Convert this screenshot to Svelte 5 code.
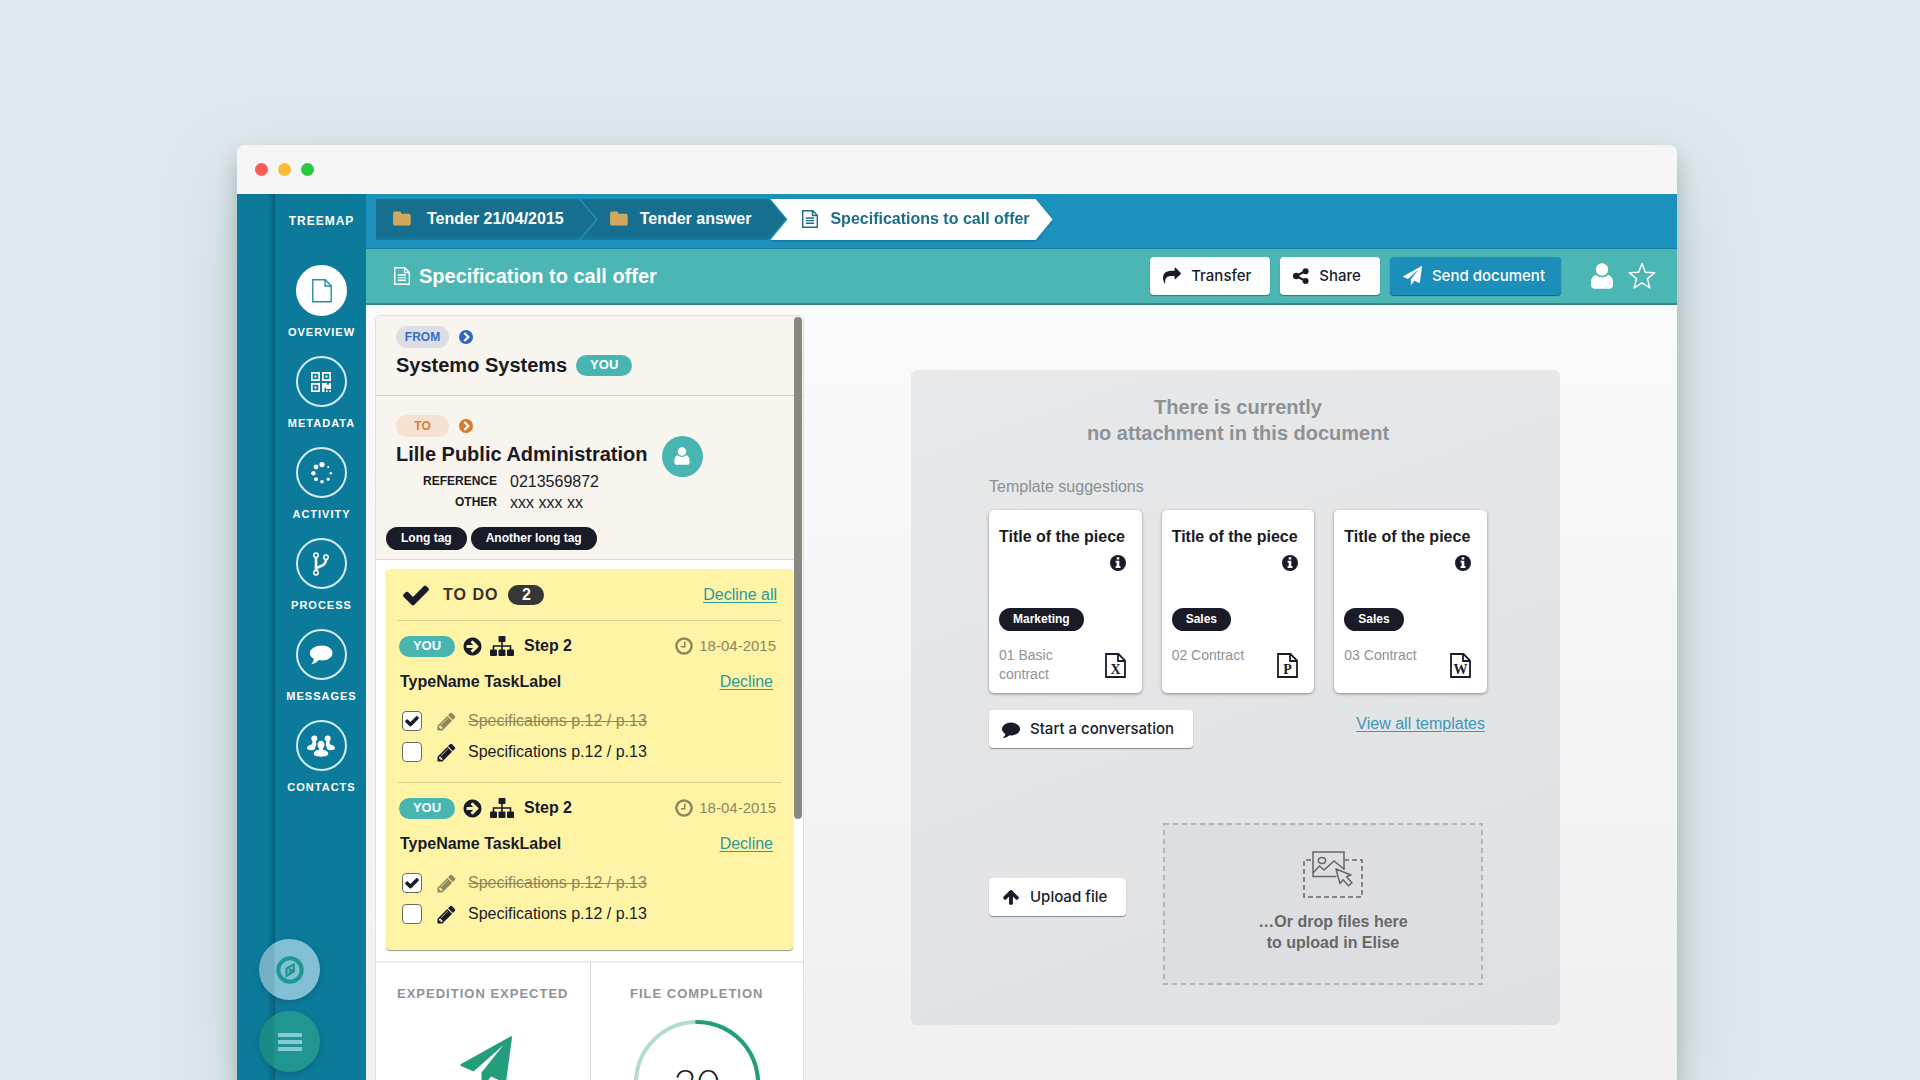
<script>
  const FA = {
    share: 'M1792 640q0 26-19 45l-512 512q-19 19-45 19t-45-19-19-45v-256h-224q-98 0-175.500 6t-154 21.500-133 42.500-105.500 69.500-80 101-48.500 138.500-17.500 181q0 55 5 123 0 6 2.500 23.500t2.500 26.500q0 15-8.500 25t-23.500 10q-16 0-28-17-7-9-13-22t-13.500-30-10.500-24q-127-285-127-451 0-199 53-333 162-403 875-403h224v-256q0-26 19-45t45-19 45 19l512 512q19 19 19 45z',
    comment: 'M1792 896q0 174-120 321.500t-326 233-450 85.500q-70 0-145-8-198 175-460 242-49 14-114 22-17 2-30.500-9t-17.500-29v-1q-3-4-.5-12t2-10 4.500-9.500l6-9 7-8.500 8-9q7-8 31-34.500t34.500-38 31-39.500 32.500-51 27-59 26-76q-157-89-247.500-220t-90.500-281q0-174 120-321.500t326-233 450-85.500 450 85.500 326 233 120 321.500z',
    pencil: 'M491 1536l91-91-235-235-91 91v107h128v128h107zm523-928q0-22-22-22-10 0-17 7l-542 542q-7 7-7 17 0 22 22 22 10 0 17-7l542-542q7-7 7-17zm-54-192l416 416-832 832h-416v-416zm683 96q0 53-37 90l-166 166-416-416 166-165q36-38 90-38 53 0 91 38l235 234q37 39 37 91z',
    check: 'M1671 566q0 40-28 68l-724 724-136 136q-28 28-68 28t-68-28l-136-136-362-362q-28-28-28-68t28-68l136-136q28-28 68-28t68 28l294 295 656-657q28-28 68-28t68 28l136 136q28 28 28 68z',
    go: 'M1413 896q0-27-18-45l-362-362-91-91q-18-18-45-18t-45 18l-91 91q-18 18-18 45t18 45l189 189h-502q-26 0-45 19t-19 45v128q0 26 19 45t45 19h502l-189 189q-19 19-19 45t19 45l91 91q18 18 45 18t45-18l91-91 362-362q18-18 18-45zm251 0q0 209-103 385.500t-279.500 279.500-385.500 103-385.500-103-279.500-279.500-103-385.500 103-385.500 279.500-279.500 385.500-103 385.500 103 279.500 279.500 103 385.500z',
    up: 'M1675 971q0 51-37 90l-75 75q-38 38-91 38-54 0-90-38l-294-293v704q0 52-37.500 84.500t-90.500 32.500h-128q-53 0-90.500-32.500t-37.500-84.500v-704l-294 293q-36 38-90 38t-90-38l-75-75q-38-38-38-90 0-53 38-91l651-651q35-37 90-37 54 0 91 37l651 651q37 39 37 91z'
  };

  const nav = ['Overview', 'Metadata', 'Activity', 'Process', 'Messages', 'Contacts'];

  let tasks = $state([
    { id: 1, items: [{ done: true }, { done: false }] },
    { id: 2, items: [{ done: true }, { done: false }] }
  ]);

  const templates = [
    { tag: 'Marketing', name: '01 Basic contract', letter: 'X' },
    { tag: 'Sales', name: '02 Contract', letter: 'P' },
    { tag: 'Sales', name: '03 Contract', letter: 'W' }
  ];
</script>

{#snippet fa(name, size)}
  <svg width={size} height={size} viewBox="0 0 1792 1792" fill="currentColor" aria-hidden="true"><path d={FA[name]} /></svg>
{/snippet}

{#snippet folder()}
  <svg width="18" height="15" viewBox="0 0 18 15" fill="#d2a95a" aria-hidden="true"><path d="M2 0.5h4.500c1 0 1.700.7 1.700 1.700v.6h7.600c1.100 0 1.900.8 1.900 1.900v8c0 1.100-.8 1.900-1.900 1.900H2c-1.100 0-1.900-.8-1.900-1.900V2.400C.1 1.300.9.5 2 .5z" /></svg>
{/snippet}

{#snippet textFile()}
  <svg width="16" height="18" viewBox="0 0 16 18" fill="none" stroke="currentColor" stroke-width="1.400" aria-hidden="true"><path d="M.7.700h10l4.600 4.600v12H.700zM10.500.700v4.800h4.800M3.800 8h8.200M3.800 10.600h8.200M3.800 13.200h8.200" /></svg>
{/snippet}

{#snippet person(w, h)}
  <svg width={w} height={h} viewBox="0 0 22 26" fill="currentColor" aria-hidden="true"><circle cx="11" cy="6.500" r="6.200" /><path d="M5 12c1.600 1.500 3.600 2.300 6 2.300s4.400-.8 6-2.300c3 .6 5 3.500 5 7.500V22c0 2.400-1.400 3.800-3.800 3.800H3.800C1.400 25.800 0 24.400 0 22v-2.500C0 15.500 2 12.600 5 12z" /></svg>
{/snippet}

{#snippet chevron()}
  <svg width="14" height="14" viewBox="0 0 14 14" aria-hidden="true"><circle cx="7" cy="7" r="7" fill="currentColor" /><path d="M5.300 3l4 4-4 4" fill="none" stroke="#fff" stroke-width="2.400" /></svg>
{/snippet}

{#snippet plane(size)}
  <svg width={size} height={size} viewBox="0 0 52 52" fill="currentColor" aria-hidden="true"><path d="M51 .3c.6-.4 1.200 0 1.100.8L46 46c-.1.800-.7 1-1.300.700L31 40.500l-8 10.700c-.6.700-1.500.3-1.500-.6V36.500L43.500 9 13.500 35.500 1 30c-1-.5-1-1.400 0-2z" /></svg>
{/snippet}

{#snippet navIcon(name)}
  {#if name === 'Overview'}
    <svg width="20" height="24" viewBox="0 0 20 24" fill="none" stroke="#2a8ba8" stroke-width="1.400"><path d="M.8.800h12.400l6 6v15.900H.8zM13 .8V7h6.200" /></svg>
  {:else if name === 'Metadata'}
    <svg width="20" height="20" viewBox="0 0 20 20" fill="#fff"><path fill-rule="evenodd" d="M0 0h9v9H0zM1.700 1.700v5.600h5.600V1.700zM11 0h9v9h-9zM12.700 1.700v5.600h5.600V1.700zM0 11h9v9H0zM1.700 12.700v5.600h5.600v-5.600z" /><path d="M3.500 3.500h2v2h-2zM14.500 3.500h2v2h-2zM3.500 14.500h2v2h-2zM11 11h5v1.800h2V11h2v6h-5v-1.500h-1.500V20H11zM15 18.300h1.700V20H15zM18.300 18.300H20V20h-1.700z" /></svg>
  {:else if name === 'Activity'}
    <svg width="22" height="22" viewBox="0 0 22 22" fill="#fff"><circle cx="11" cy="2.600" r="2.600" /><circle cx="5" cy="5" r="2.400" /><circle cx="2.400" cy="11.200" r="2.200" /><circle cx="5" cy="17.200" r="2" /><circle cx="11" cy="19.800" r="1.800" /><circle cx="17.200" cy="17.200" r="1.600" /><circle cx="19.800" cy="11.200" r="1.300" /><circle cx="17.200" cy="5" r="1" /></svg>
  {:else if name === 'Process'}
    <svg width="16" height="24" viewBox="0 0 16 24" fill="none" stroke="#fff"><g stroke-width="1.500"><circle cx="3" cy="3.200" r="2.200" /><circle cx="3" cy="20.800" r="2.200" /><circle cx="13" cy="5.200" r="2.200" /></g><path stroke-width="2.600" d="M3 5.400v13.200M13 7.400c0 4.500-2.500 5.800-5.500 6.800C4.500 15.200 3 16 3 18" /></svg>
  {:else if name === 'Messages'}
    <svg width="24" height="20" viewBox="0 0 24 20" fill="#fff"><path d="M13 .5c6 0 10.500 3.300 10.500 7.500S19 15.500 13 15.500c-1.200 0-2.300-.1-3.300-.4C7.600 17.700 5 19 2 19.300c1.600-1.300 2.600-3 2.900-5.500C2.300 12.400.8 10.400.8 8 .8 3.800 7 .5 13 .5z" /></svg>
  {:else}
    <svg width="28" height="22" viewBox="0 0 28 22" fill="#fff"><circle cx="7.300" cy="3.600" r="3" /><circle cx="20.700" cy="3.600" r="3" /><path d="M5.500 5h3.600c-.6 1.600-.2 2.900.3 4L7.500 14.500c-2.500 1.200-7 .6-7.500-1-.2-2 1.800-3.200 4-3.700 1.300-.4 1.700-2.500 1.500-4.800zM22.500 5h-3.600c.6 1.600.2 2.900-.3 4l1.900 5.500c2.500 1.200 7 .6 7.500-1 .2-2-1.800-3.200-4-3.700-1.300-.4-1.700-2.500-1.500-4.800z" /><path d="M14 5.700c2 0 3.400 1.500 3.400 3.700 0 1.600-.5 3-1.400 3.900v1.400c3.300.5 5.300 2 5.300 4.400 0 1.700-3.300 2.600-7.300 2.600S6.700 20.800 6.700 19.100c0-2.400 2-3.900 5.300-4.400v-1.400c-.9-.9-1.400-2.300-1.400-3.900 0-2.200 1.400-3.700 3.400-3.700z" /></svg>
  {/if}
{/snippet}

<div class="page">
  <div class="window">
    <div class="titlebar"><i class="red"></i><i class="amber"></i><i class="green"></i></div>

    <div class="app">
      <aside class="sidebar">
        <div class="strip"></div>
        <nav class="menu" aria-label="Sections">
          <span class="brand">TREEMAP</span>
          {#each nav as name, i}
            <a href="#{name}" class:active={i === 0}>
              <span class="ring">{@render navIcon(name)}</span>
              <span class="label">{name.toUpperCase()}</span>
            </a>
          {/each}
        </nav>
        <div class="floating">
          <button class="compass" aria-label="Explore">
            <svg width="28" height="28" viewBox="0 0 28 28" fill="none" stroke="#1c988e"><circle cx="14" cy="14" r="11.700" stroke-width="4" /><path stroke-width="2.200" d="M10.500 12.500l7.300-4v7l-7.300 4.500zM13 13l3 1.500-3 2" /></svg>
          </button>
          <button class="burger" aria-label="Menu">
            <svg width="24" height="18" viewBox="0 0 24 18" fill="#86c9d6"><path d="M0 0h24v4H0zM0 7h24v4H0zM0 14h24v4H0z" /></svg>
          </button>
        </div>
      </aside>

      <div class="main">
        <nav class="crumbs" aria-label="Breadcrumb">
          <span class="shade"><a class="crumb first" href="#tender">{@render folder()}Tender 21/04/2015</a></span>
          <span class="shade"><a class="crumb" href="#answer">{@render folder()}Tender answer</a></span>
          <span class="shade lifted"><a class="crumb current" href="#spec">{@render textFile()}Specifications to call offer</a></span>
        </nav>

        <header class="docbar">
          <h1>{@render textFile()}Specification to call offer</h1>
          <div class="actions">
            <button class="btn">{@render fa('share', 18)}Transfer</button>
            <button class="btn">
              <svg width="16" height="16" viewBox="0 0 16 16" aria-hidden="true"><path d="M12.500 3L3.200 8l9.300 5" fill="none" stroke="currentColor" stroke-width="2" /><g fill="currentColor"><circle cx="12.600" cy="3.200" r="3" /><circle cx="3.200" cy="8" r="3.200" /><circle cx="12.600" cy="12.900" r="3" /></g></svg>Share</button>
            <button class="btn send">{@render plane(19)}Send document</button>
          </div>
          <div class="marks">
            <button class="bare" aria-label="Profile">{@render person(22, 26)}</button>
            <button class="bare" aria-label="Favourite">
              <svg width="28" height="28" viewBox="0 0 28 28" fill="none" stroke="#fff" stroke-width="1.400" stroke-linejoin="round"><path d="M14 1.500l3.400 8.800 9.300.4-7.300 5.900 2.500 9.400L14 20.800 6.100 26l2.500-9.400-7.300-5.900 9.300-.4z" /></svg>
            </button>
          </div>
        </header>

        <div class="content">
          <section class="panel">
            <div class="party from">
              <div class="line"><span class="chip blue">FROM</span><span class="dot blue-dot">{@render chevron()}</span></div>
              <div class="line name"><h2>Systemo Systems</h2><span class="you">YOU</span></div>
            </div>
            <div class="party to">
              <div class="line"><span class="chip orange">TO</span><span class="dot orange-dot">{@render chevron()}</span></div>
              <div class="line name"><h2>Lille Public Administration</h2><span class="avatar">{@render person(16, 18)}</span></div>
              <dl>
                <dt>REFERENCE</dt><dd>0213569872</dd>
                <dt>OTHER</dt><dd>xxx xxx xx</dd>
              </dl>
              <div class="tags"><span class="tag">Long tag</span><span class="tag">Another long tag</span></div>
            </div>

            <div class="todo">
              <div class="todo-head">
                {@render fa('check', 30)}
                <h3>TO DO</h3><span class="count">2</span>
                <a href="#decline-all">Decline all</a>
              </div>
              {#each tasks as task}
                <div class="task">
                  <div class="step">
                    <span class="you">YOU</span>
                    {@render fa('go', 21)}
                    <svg width="24" height="20" viewBox="0 0 24 20" fill="currentColor" aria-hidden="true"><rect x="8.500" y="0" width="7" height="6" rx="1" /><rect x="0" y="13.500" width="7" height="6.500" rx="1" /><rect x="8.500" y="13.500" width="7" height="6.500" rx="1" /><rect x="17" y="13.500" width="7" height="6.500" rx="1" /><path d="M11.200 5h1.600v4.200H21.300V14h-1.600v-3.200h-6.900V14h-1.600v-3.200H4.300V14H2.700V9.200h8.500z" /></svg>
                    <strong>Step 2</strong>
                    <span class="date">
                      <svg width="18" height="18" viewBox="0 0 18 18" fill="none" stroke="currentColor" aria-hidden="true"><circle cx="9" cy="9" r="7.600" stroke-width="2.500" /><path stroke-width="1.500" d="M9.800 4.500v5.300H5.800" /></svg>
                      18-04-2015
                    </span>
                  </div>
                  <div class="task-name"><strong>TypeName TaskLabel</strong><a href="#decline-{task.id}">Decline</a></div>
                  {#each task.items as item}
                    <label class="check" class:done={item.done}>
                      <span class="box"><input type="checkbox" bind:checked={item.done} />{#if item.done}{@render fa('check', 16)}{/if}</span>
                      {@render fa('pencil', 21)}
                      <span>Specifications p.12 / p.13</span>
                    </label>
                  {/each}
                </div>
              {/each}
            </div>

            <div class="stats">
              <div class="stat"><h4>EXPEDITION EXPECTED</h4><span class="big-plane">{@render plane(52)}</span></div>
              <div class="stat">
                <h4>FILE COMPLETION</h4>
                <div class="gauge">
                  <svg width="126" height="126" viewBox="0 0 126 126" fill="none" stroke-width="4" aria-hidden="true"><circle cx="63" cy="63" r="61" stroke="#b4dccd" /><path d="M63 2a61 61 0 0 1 58 80" stroke="#249d7d" stroke-linecap="round" /></svg>
                  <span>30</span>
                </div>
              </div>
            </div>
            <div class="thumb" aria-hidden="true"></div>
          </section>

          <section class="stage">
            <div class="empty">
              <h2>There is currently<br />no attachment in this document</h2>
              <p class="hint">Template suggestions</p>
              <div class="cards">
                {#each templates as t}
                  <article class="card">
                    <h3>Title of the piece</h3>
                    <svg class="info" width="16" height="16" viewBox="0 0 16 16" aria-hidden="true"><circle cx="8" cy="8" r="8" fill="#191b28" /><path fill="#fff" d="M6.700 2.300h2.600v2.200H6.700zM5.600 5.800h3.700v5.300h1.100V13H5.600v-1.900h1.100V7.600H5.600z" /></svg>
                    <span class="tag">{t.tag}</span>
                    <div class="card-foot">
                      <span>{t.name}</span>
                      <svg width="21" height="25" viewBox="0 0 21 25" aria-hidden="true"><path d="M1 1h12.500L20 7.500V24H1zM13 1v7h7" fill="none" stroke="#191b28" stroke-width="1.800" /><text x="10.500" y="21" text-anchor="middle">{t.letter}</text></svg>
                    </div>
                  </article>
                {/each}
              </div>
              <div class="row">
                <button class="btn">{@render fa('comment', 18)}Start a conversation</button>
                <a href="#templates">View all templates</a>
              </div>
              <div class="row uploads">
                <button class="btn">{@render fa('up', 18)}Upload file</button>
                <div class="drop">
                  <svg class="edge" width="100%" height="100%" aria-hidden="true"><rect x="1" y="1" width="100%" height="100%" /></svg>
                  <svg width="60" height="47" viewBox="0 0 60 47" fill="none" stroke="#666" stroke-width="1.500" aria-hidden="true"><path stroke-dasharray="5 3" d="M8 9H1v37h58V9H42" /><path d="M33.500 25.500H10V1h31v18" /><ellipse cx="19" cy="9.500" rx="3.600" ry="3" /><path d="M10 22l6.500-7 4.500 4 10-9 10 8" /><path stroke-linejoin="round" d="M33 18l4 14.500 3-3.800 5.500 6 3.500-3-5.500-6 4.500-1.700z" /></svg>
                  <p>…Or drop files here<br />to upload in Elise</p>
                </div>
              </div>
            </div>
          </section>
        </div>
      </div>
    </div>
  </div>
</div>

<style>
  :global(body) { margin: 0; }
  .page, .page :global(*) { box-sizing: border-box; }
  .page {
    display: flex;
    height: 100vh;
    padding: 145px 243px 0 237px;
    overflow: hidden;
    background: #e0e9ef;
    color: #1a1a1f;
    font: 16px/20px "Liberation Sans", Arial, sans-serif;
  }
  h1, h2, h3, h4, p, dl, dd { margin: 0; }
  svg { flex: none; display: block; }
  button { border: 0; padding: 0; cursor: pointer; }
  a { color: #2c9a9c; text-underline-offset: 2px; }

  .window {
    flex: 1;
    display: flex;
    flex-direction: column;
    min-width: 0;
    border-radius: 8px 8px 0 0;
    box-shadow: 0 12px 20px rgba(70, 85, 80, 0.3), 0 30px 80px rgba(80, 130, 120, 0.25);
  }
  .titlebar {
    flex: none;
    display: flex;
    align-items: center;
    gap: 10px;
    height: 49px;
    padding-left: 18px;
    border-radius: 8px 8px 0 0;
    background: #f6f6f6;
  }
  .titlebar i { width: 13px; height: 13px; border-radius: 50%; }
  .red { background: #fc5b5b; }
  .amber { background: #fcbb35; }
  .green { background: #2ac742; }

  .app { flex: 1; display: flex; min-height: 0; }

  .sidebar { position: relative; flex: none; display: flex; background: #0c7b9b; }
  .strip { width: 38px; background: linear-gradient(90deg, #0c7b9b 30px, #096a84 36px, #065d75); }
  .menu { display: flex; flex-direction: column; align-items: center; width: 91px; padding: 17px 0 0 2px; color: #fff; }
  .brand { margin-bottom: 34px; font-weight: bold; font-size: 12px; letter-spacing: 1px; }
  .menu a { display: flex; flex-direction: column; align-items: center; gap: 8px; height: 91px; color: #fff; text-decoration: none; }
  .ring { display: grid; place-items: center; width: 51px; height: 51px; border: 2px solid #d5edf2; border-radius: 50%; }
  .active .ring { border-color: #fff; background: #fff; }
  .label { font-weight: bold; font-size: 11px; line-height: 16px; letter-spacing: 1px; }
  .floating { position: absolute; left: 22px; bottom: 8px; display: flex; flex-direction: column; gap: 11px; }
  .floating button { display: grid; place-items: center; width: 61px; height: 61px; border-radius: 50%; box-shadow: 0 2px 6px rgba(0, 50, 70, 0.3); }
  .compass { background: linear-gradient(90deg, #74b0c4 14px, #83c0d6 17px); }
  .burger { background: linear-gradient(90deg, #1b8a84 14px, #209690 17px); }

  .main { flex: 1; display: flex; flex-direction: column; min-width: 0; }
  .crumbs { flex: none; display: flex; height: 55px; padding: 5px 0 0 10px; background: #1b91bc; border-bottom: 1px solid #1a7fa5; }
  .shade { height: 41px; }
  .lifted { filter: drop-shadow(0 1px 1px rgba(10, 70, 100, 0.4)); }
  .shade + .shade { margin-left: -15px; }
  .crumb {
    display: flex;
    align-items: center;
    gap: 12px;
    height: 100%;
    padding: 0 34px 2px 29px;
    clip-path: polygon(0 0, calc(100% - 17px) 0, 100% 50%, calc(100% - 17px) 100%, 0 100%, 17px 50%);
    background: linear-gradient(180deg, #166f8f 36px, #187ca0);
    color: #fff;
    font-weight: bold;
    text-decoration: none;
    white-space: nowrap;
  }
  .crumb.first { gap: 16px; padding: 0 32px 2px 17px; clip-path: polygon(0 0, calc(100% - 17px) 0, 100% 50%, calc(100% - 17px) 100%, 0 100%); }
  .crumb.current { padding: 0 23px 2px 32px; background: #fff; color: #1b6d88; }

  .docbar { flex: none; display: flex; align-items: center; height: 56px; padding: 0 21px 1px 28px; background: #4bb6b4; border-bottom: 2px solid #34888a; }
  h1 { display: flex; align-items: center; gap: 9px; color: #fff; font-size: 20px; line-height: 26px; white-space: nowrap; }
  .actions { display: flex; gap: 10px; margin-left: auto; }
  .btn {
    display: inline-flex;
    align-items: center;
    gap: 10px;
    height: 38px;
    padding: 0 19px 0 13px;
    border-radius: 4px;
    background: #fff;
    box-shadow: 0 1px 1px rgba(40, 50, 60, 0.5);
    color: #191b28;
    font: 500 15px/20px Inter, "Liberation Sans", sans-serif;
    white-space: nowrap;
  }
  .btn.send { padding: 0 16px 0 13px; background: #1b8eba; color: #fff; box-shadow: 0 1px 1px #12607f; }
  .marks { display: flex; align-items: center; gap: 15px; margin-left: 30px; }
  .bare { background: none; color: #fff; }

  .content { flex: 1; display: flex; min-height: 0; padding-left: 9px; background: linear-gradient(180deg, #fafafa, #f0f0f1); }
  .panel {
    position: relative;
    flex: none;
    align-self: flex-start;
    width: 429px;
    margin-top: 10px;
    border: 1px solid #e0dfde;
    border-radius: 5px;
    background: #fff;
  }
  .party { padding: 0 20px; background: #f8f4ee; border-bottom: 1px solid #cfccc8; }
  .from { padding-top: 10px; height: 80px; border-radius: 4px 4px 0 0; }
  .to { padding-top: 19px; height: 164px; border-color: #dedcd9; }
  .line { display: flex; align-items: center; }
  .chip { display: grid; place-items: center; width: 53px; height: 22px; border-radius: 11px; font-weight: bold; font-size: 12px; }
  .blue { background: #dcdee6; color: #3a6cc4; }
  .orange { background: #f6e2d3; color: #d97f37; }
  .dot { margin-left: 10px; }
  .blue-dot { color: #2f66bf; }
  .orange-dot { color: #d67a30; }
  .name { height: 34px; gap: 9px; }
  h2 { font-size: 20px; line-height: 26px; }
  .you { display: grid; place-items: center; width: 56px; height: 21px; border-radius: 11px; background: #48b5b1; color: #fff; font-weight: bold; font-size: 13px; }
  .avatar { display: grid; place-items: center; width: 41px; height: 41px; margin: 4px 0 0 5px; border-radius: 50%; background: #48b5b1; color: #fff; }
  dl { display: grid; grid-template-columns: 101px 1fr; column-gap: 13px; line-height: 21px; }
  dt { font-weight: bold; font-size: 12px; text-align: right; }
  .tags { display: flex; gap: 4px; margin: 14px 0 0 -10px; }
  .tags .tag { padding: 0 15px; }
  .tag { display: inline-block; padding: 0 14px; border-radius: 12px; background: #191b28; color: #fff; font-weight: bold; font-size: 12px; line-height: 23px; white-space: nowrap; }

  .todo { margin: 9px 10px 11px 10px; padding: 0 12px 6px; border-radius: 4px; background: #fff4a6; box-shadow: 0 1px 1px rgba(80, 80, 60, 0.6); color: #191b28; }
  .todo-head { display: flex; align-items: center; height: 51px; padding: 0 4px 0 3px; }
  h3 { font-size: 16px; line-height: 20px; }
  .todo-head h3 { margin: 0 10px 0 12px; color: #33322f; letter-spacing: 1px; }
  .count { width: 36px; border-radius: 10px; background: #363636; color: #fff; font-weight: bold; text-align: center; }
  .todo-head a { margin-left: auto; }
  .task { padding-top: 13px; height: 162px; border-top: 1px solid #d9d08e; }
  .step { display: flex; align-items: center; gap: 7px; height: 24px; padding: 0 5px 0 1px; }
  .step strong { margin-left: 3px; }
  .date { display: flex; align-items: center; gap: 6px; margin-left: auto; color: #8d875b; font-size: 15px; }
  .task-name { display: flex; justify-content: space-between; margin: 14px 8px 19px 2px; }
  .check { display: flex; align-items: center; height: 20px; margin: 0 0 11px 4px; }
  .box { display: grid; place-items: center; width: 20px; height: 20px; margin-right: 14px; }
  .box :global(svg) { grid-area: 1 / 1; pointer-events: none; }
  .check input { grid-area: 1 / 1; appearance: none; width: 20px; height: 20px; margin: 0; border: 1px solid #6b6a60; border-radius: 4px; background: #fff; }
  .check > span:last-child { margin-left: 11px; }
  .done > span:last-child { color: #8d875b; text-decoration: line-through; }
  .done > :global(svg) { color: #8d875b; }

  .stats { display: grid; grid-template-columns: 1fr 1fr; border-top: 2px solid #ececec; }
  .stat { display: flex; flex-direction: column; align-items: center; padding-top: 21px; }
  .stat + .stat { border-left: 1px solid #d6d6d6; }
  h4 { color: #8f9297; font-size: 13px; line-height: 20px; letter-spacing: 1px; white-space: nowrap; }
  .big-plane { margin-top: 32px; padding-left: 6px; color: #249d7d; }
  .gauge { display: grid; place-items: center; margin-top: 16px; }
  .gauge > * { grid-area: 1 / 1; }
  .gauge span { font: 300 40px/44px Lato, "Liberation Sans", sans-serif; }
  .thumb { position: absolute; top: 1px; right: 1px; width: 8px; height: 502px; border-radius: 4px; background: #888782; }

  .stage { flex: 1; min-width: 0; padding: 65px 117px 0 107px; }
  .empty { height: 655px; padding: 24px 73px 0 78px; border-radius: 6px; background: linear-gradient(160deg, #e7e9ea, #dfe0e3); }
  .empty h2 { color: #8e9196; text-align: center; }
  .hint { margin: 31px 0 13px; color: #8b8f94; }
  .cards { display: grid; grid-template-columns: repeat(3, 1fr); gap: 20px; }
  .card { display: flex; flex-direction: column; align-items: flex-start; height: 183px; padding: 17px 16px 0 10px; border-radius: 5px; background: #fff; box-shadow: 0 1px 3px rgba(40, 50, 60, 0.5); white-space: nowrap; }
  .info { align-self: flex-end; margin: 8px 0 37px; }
  .card-foot { display: flex; justify-content: space-between; align-self: stretch; margin-top: 15px; color: #8f9297; font-size: 14px; line-height: 19px; white-space: normal; }
  .card-foot span { max-width: 76px; }
  .card-foot svg { margin-top: 7px; }
  .card-foot text { font: bold 14px "Liberation Serif", serif; fill: #191b28; }
  .row { display: flex; justify-content: space-between; margin-top: 17px; }
  .row > a { margin: 4px 2px 0 0; color: #3f97b9; }
  .uploads { align-items: flex-start; margin: 75px 4px 0 0; }
  .uploads .btn { margin-top: 55px; }
  .drop { position: relative; display: flex; flex-direction: column; align-items: center; width: 320px; height: 162px; padding: 28px 0 0 20px; background: #dddee1; color: #686869; font-weight: bold; line-height: 21px; text-align: center; }
  .drop p { margin-top: 13px; }
  .edge { position: absolute; inset: 0; padding: 0 2px 2px 0; overflow: visible; }
  .edge rect { fill: none; stroke: #b4b6bb; stroke-width: 2; stroke-dasharray: 5 4; }
</style>
